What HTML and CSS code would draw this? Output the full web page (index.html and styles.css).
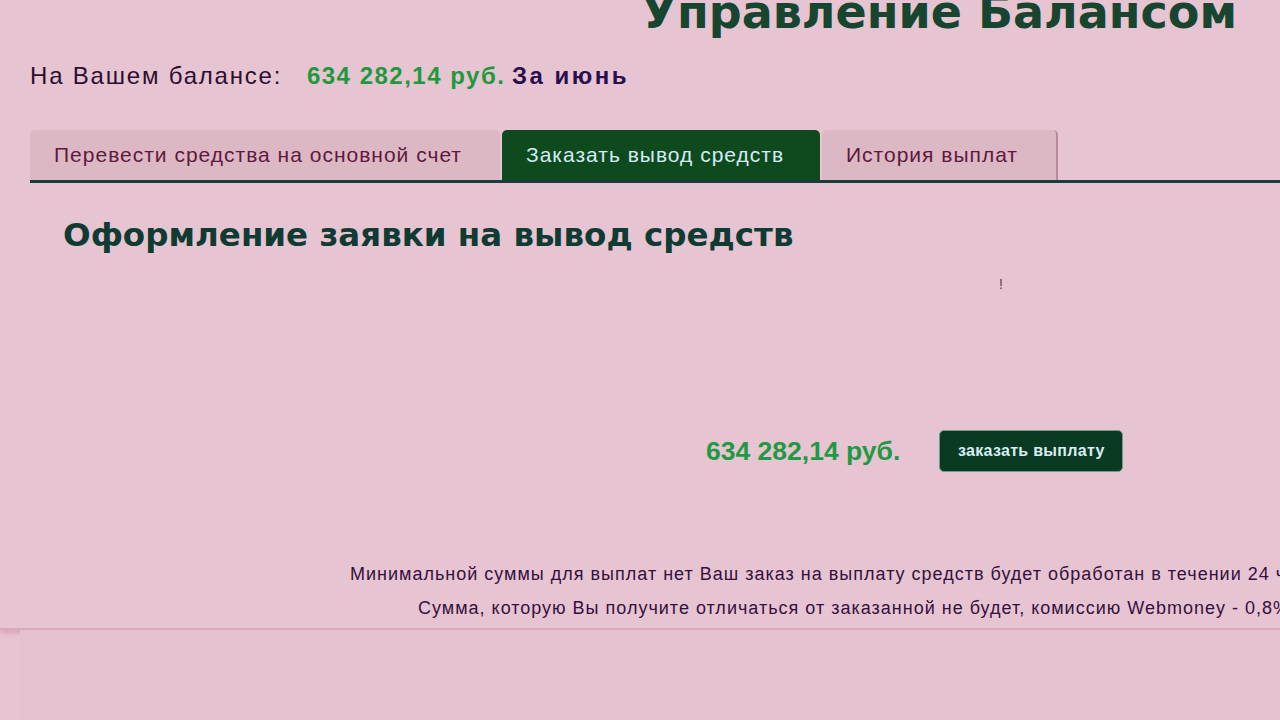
FILE: index.html
```html
<!DOCTYPE html>
<html lang="ru">
<head>
  <meta charset="UTF-8">
  <title>Управление Балансом</title>
  <link rel="stylesheet" href="styles.css">
</head>
<body>
  <div class="page">
    <h1 class="title">Управление Балансом</h1>

    <div class="balance">
      <span class="balance-label">На Вашем балансе:</span>
      <span class="balance-sum">634 282,14 руб.</span>
      <span class="balance-month">За июнь</span>
    </div>

    <div class="tabs">
      <a class="tab tab-first">Перевести средства на основной счет</a>
      <a class="tab active">Заказать вывод средств</a>
      <a class="tab tab-last">История выплат</a>
    </div>

    <div class="content">
      <h2 class="form-title">Оформление заявки на вывод средств</h2>
      <div class="mark">!</div>

      <div class="order">
        <span class="order-sum">634 282,14 руб.</span>
        <button class="order-btn">заказать выплату</button>
      </div>

      <div class="notes">
        <p class="note-first">Минимальной суммы для выплат нет Ваш заказ на выплату средств будет обработан в течении 24 часов.</p>
        <p class="note-second">Сумма, которую Вы получите отличаться от заказанной не будет, комиссию Webmoney - 0,8% мы берем на себя.</p>
      </div>
    </div>
  </div>
  <div class="bottom"></div>
</body>
</html>
```

FILE: styles.css
```css
body {
  margin: 0;
  background-color: #e7c4d1;
  font-family: "Liberation Sans", Arial, sans-serif;
  color: #2e0f33;
  overflow: hidden;
}

.page {
  display: flow-root;
  height: 628px;
  overflow: hidden;
  border-bottom: 2px solid #d9a9bd;
  box-shadow: 0 3px 5px rgba(180, 110, 140, 0.35);
}

.title {
  margin: -12px 43px 0 0;
  text-align: right;
  font-family: "DejaVu Sans", Verdana, sans-serif;
  font-size: 46px;
  line-height: 48px;
  font-weight: bold;
  color: #17452f;
  white-space: nowrap;
}

.balance {
  margin: 25px 0 0 30px;
  font-size: 24px;
  line-height: 30px;
}

.balance-label {
  color: #2b0f2e;
  letter-spacing: 1.8px;
  margin-right: 18px;
}

.balance-sum {
  color: #1e9a3d;
  font-weight: bold;
  letter-spacing: 1.5px;
}

.balance-month {
  color: #2a0f4e;
  font-weight: bold;
  letter-spacing: 2.5px;
}

.tabs {
  display: flex;
  margin: 39px 0 0 30px;
  border-bottom: 3px solid #1c3d3b;
}

.tab {
  display: block;
  height: 50px;
  line-height: 50px;
  padding: 0 24px;
  font-size: 21px;
  letter-spacing: 1px;
  color: #5e1a3d;
  background-color: #dcb7c4;
  border-radius: 5px 5px 0 0;
  margin-right: 2px;
  white-space: nowrap;
}

.tab-first {
  width: 422px;
}

.tab-last {
  width: 186px;
  border-right: 2px solid #b58a9c;
}

.tab.active {
  width: 270px;
  background-color: #0f4a1f;
  color: #d2ecf2;
}

.content {
  position: relative;
  padding: 32px 0 0 63px;
}

.form-title {
  margin: 0;
  font-family: "DejaVu Sans", Verdana, sans-serif;
  font-size: 32.5px;
  line-height: 40px;
  color: #0f3b33;
  white-space: nowrap;
}

.mark {
  position: absolute;
  left: 999px;
  top: 93px;
  font-size: 14px;
  color: #5a3a4a;
}

.order {
  display: flex;
  align-items: center;
  margin: 175px 0 0 643px;
}

.order-sum {
  font-size: 26.5px;
  font-weight: bold;
  color: #1f9a44;
  white-space: nowrap;
}

.order-btn {
  margin-left: 39px;
  width: 184px;
  height: 42px;
  padding: 0;
  background-color: #0b3a22;
  border: 1px solid #6f9c8c;
  border-radius: 5px;
  color: #d8eef2;
  font-family: "Liberation Sans", Arial, sans-serif;
  font-size: 16px;
  font-weight: bold;
  letter-spacing: 0.3px;
  white-space: nowrap;
}

.notes {
  margin-top: 92px;
  white-space: nowrap;
  font-size: 18px;
  letter-spacing: 1px;
  color: #35103d;
}

.notes p {
  margin: 0 0 14px;
  line-height: 20px;
}

.note-first {
  padding-left: 287px;
}

.note-second {
  padding-left: 355px;
}

.bottom {
  height: 100px;
  margin-left: 20px;
  background-color: #e5c1cf;
}
```
